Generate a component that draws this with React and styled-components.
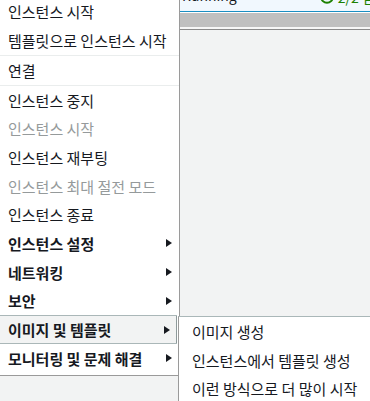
import React from 'react';
import styled, { createGlobalStyle } from 'styled-components';

const GlobalStyle = createGlobalStyle`
  html, body {
    margin: 0;
    padding: 0;
    background: #f2f3f3;
  }
  body {
    font-family: "Noto Sans CJK KR", "Noto Sans", "Liberation Sans", sans-serif;
    overflow: hidden;
  }
`;

const Page = styled.div`
  position: relative;
  width: 370px;
  height: 401px;
  overflow: hidden;
  background: #f2f3f3;
`;

const StatusStrip = styled.div`
  height: 11px;
  background: #f1f8fe;
  border-bottom: 1px solid #1a8ec2;
  overflow: hidden;
  display: flex;
  align-items: flex-end;
  padding-left: 182px;
  gap: 83px;
  font-size: 14px;
  line-height: 14px;
  color: #16191f;
`;

const CutText = styled.span`
  margin-bottom: 9px;
  white-space: nowrap;
`;

const Status = styled.span`
  display: flex;
  align-items: flex-end;
  gap: 4px;
  color: #1d8102;
  margin-bottom: 7px;
  white-space: nowrap;
`;

const Spacer = styled.div`
  height: 1px;
  background: #ffffff;
`;

const GrayBar = styled.div`
  height: 14px;
  background: #c0c0c0;
`;

const GrayBarEdge = styled.div`
  height: 2px;
  background: #f7f7f7;
  border-bottom: 1px solid #8a8a8a;
`;

const Menu = styled.ul`
  position: absolute;
  left: 0;
  top: -2.4px;
  width: 179px;
  margin: 0;
  padding: 0 0 2px;
  list-style: none;
  background: #ffffff;
  border-right: 1px solid #9a9a9a;
  border-bottom: 1px solid #9a9a9a;
  box-sizing: content-box;
`;

const Item = styled.li`
  position: relative;
  height: 28.7px;
  display: flex;
  align-items: center;
  padding-left: 8px;
  box-sizing: border-box;
  font-size: 15px;
  white-space: nowrap;
  color: ${p => (p.disabled ? '#959a9b' : '#16191f')};
  font-weight: ${p => (p.strong ? 700 : 400)};
  background: ${p => (p.active ? '#f2f3f3' : 'transparent')};
  border-top: ${p => (p.active ? '1px solid #aab7b8' : 'none')};
  border-bottom: ${p => (p.active ? '1px solid #aab7b8' : 'none')};
  margin-right: ${p => (p.active ? '2px' : '0')};
  box-shadow: ${p => (p.active ? 'inset -1px 0 0 #8e9a9b' : 'none')};
`;

const Separator = styled.li`
  height: 1px;
  background: #eaeded;
`;

const Arrow = styled.span`
  position: absolute;
  right: 7px;
  top: 50%;
  margin-top: -4px;
  width: 0;
  height: 0;
  border-left: 6px solid #16191f;
  border-top: 4px solid transparent;
  border-bottom: 4px solid transparent;
`;

const SubMenu = styled.ul`
  position: absolute;
  left: 178px;
  top: 316px;
  right: 0;
  bottom: 0;
  margin: 0;
  padding: 0;
  list-style: none;
  background: #ffffff;
  border-left: 1px solid #9a9a9a;
  border-top: 1px solid #aab7b8;
`;

const SubItem = styled.li`
  height: 28.7px;
  display: flex;
  align-items: center;
  padding-left: 13px;
  font-size: 15px;
  color: #16191f;
  white-space: nowrap;
`;

const CheckIcon = () => (
  <svg width="14" height="14" viewBox="0 0 14 14">
    <circle cx="7" cy="7" r="5.8" fill="none" stroke="#1d8102" strokeWidth="2" />
    <path d="M4.3 7.2 L6.2 9 L9.8 5" fill="none" stroke="#1d8102" strokeWidth="1.6" />
  </svg>
);

const items = [
  { label: '인스턴스 시작' },
  { label: '템플릿으로 인스턴스 시작' },
  { sep: true },
  { label: '연결' },
  { sep: true },
  { label: '인스턴스 중지' },
  { label: '인스턴스 시작', disabled: true },
  { label: '인스턴스 재부팅' },
  { label: '인스턴스 최대 절전 모드', disabled: true },
  { label: '인스턴스 종료' },
  { label: '인스턴스 설정', strong: true, sub: true },
  { label: '네트워킹', strong: true, sub: true },
  { label: '보안', strong: true, sub: true },
  { label: '이미지 및 템플릿', strong: true, sub: true, active: true },
  { label: '모니터링 및 문제 해결', strong: true, sub: true },
];

const subItems = ['이미지 생성', '인스턴스에서 템플릿 생성', '이런 방식으로 더 많이 시작'];

export default function App() {
  return (
    <>
      <GlobalStyle />
      <Page>
        <StatusStrip>
          <CutText>Running</CutText>
          <Status>
            <CheckIcon />
            2/2 검사 통과
          </Status>
        </StatusStrip>
        <Spacer />
        <GrayBar />
        <GrayBarEdge />

        <Menu>
          {items.map((it, i) =>
            it.sep ? (
              <Separator key={i} />
            ) : (
              <Item key={i} disabled={it.disabled} strong={it.strong} active={it.active}>
                {it.label}
                {it.sub && <Arrow />}
              </Item>
            )
          )}
        </Menu>

        <SubMenu>
          {subItems.map(s => (
            <SubItem key={s}>{s}</SubItem>
          ))}
        </SubMenu>
      </Page>
    </>
  );
}
